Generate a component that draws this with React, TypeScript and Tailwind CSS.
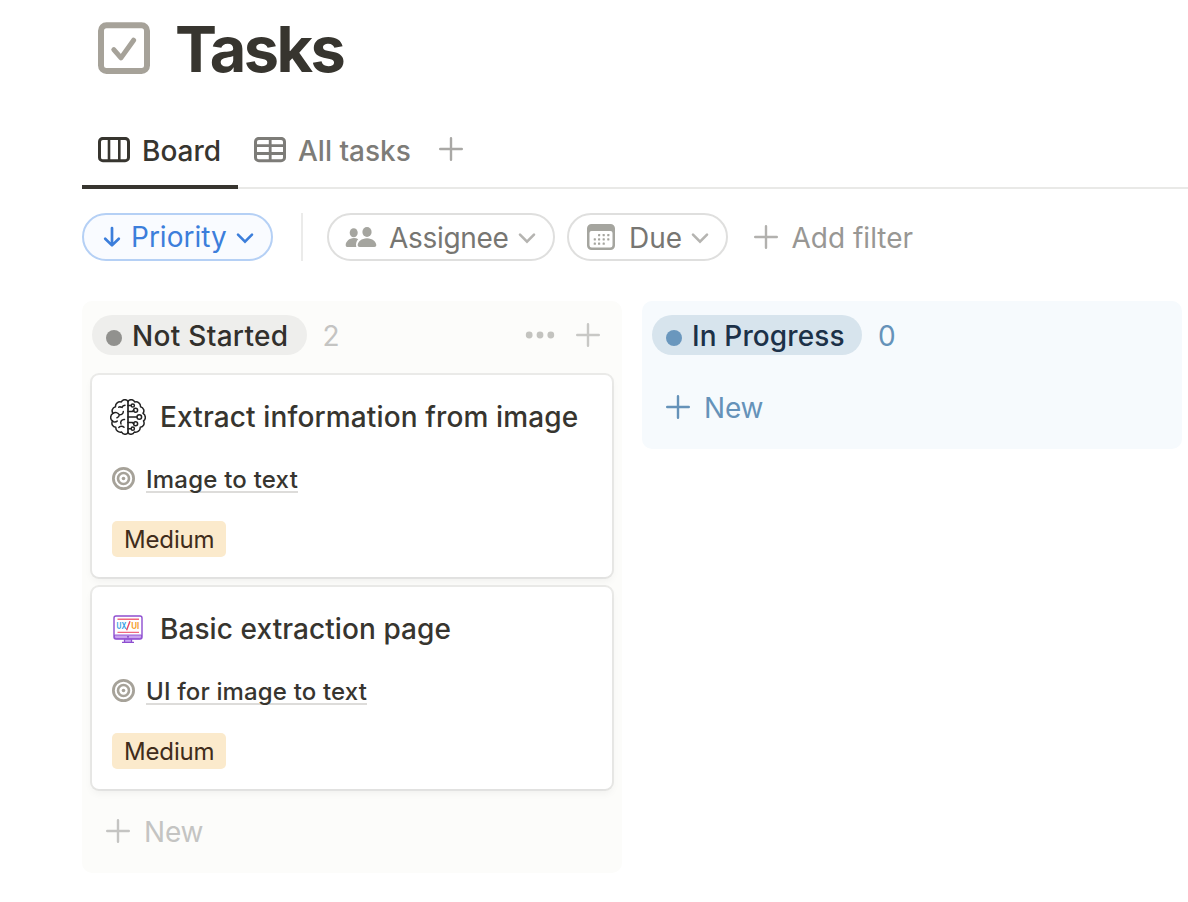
import type { ReactNode } from "react";

function Plus({ className = "" }: { className?: string }) {
  return (
    <svg viewBox="0 0 24 24" fill="none" stroke="currentColor" strokeWidth="2.4" strokeLinecap="round" className={`size-6 shrink-0 ${className}`}>
      <path d="M12 1.200v21.600M1.200 12h21.600" />
    </svg>
  );
}

function Chevron({ className = "" }: { className?: string }) {
  return (
    <svg viewBox="0 0 18 12" fill="none" stroke="currentColor" strokeWidth="2.6" strokeLinecap="round" strokeLinejoin="miter" className={`h-3 w-[18px] shrink-0 ${className}`}>
      <path d="M2 2.700l7 7 7-7" />
    </svg>
  );
}

function CheckboxIcon() {
  return (
    <svg viewBox="0 0 52 52" fill="none" stroke="#a6a299" className="size-[52px] shrink-0">
      <rect x="3" y="3.200" width="46" height="45.800" rx="5.5" strokeWidth="6" />
      <path d="M15.8 27.700l7.2 8.2L35.6 18.2" strokeWidth="5" strokeLinecap="round" strokeLinejoin="round" />
    </svg>
  );
}

function BoardIcon() {
  return (
    <svg viewBox="0 0 32 26" fill="none" stroke="currentColor" className="h-[26px] w-8 shrink-0">
      <rect x="1.5" y="1.4" width="29" height="22.4" rx="3.4" strokeWidth="3" />
      <path d="M11 2v22M21.3 2v22" strokeWidth="2.600" />
    </svg>
  );
}

function TableIcon() {
  return (
    <svg viewBox="0 0 32 26" fill="none" stroke="currentColor" className="h-[26px] w-8 shrink-0">
      <rect x="1.5" y="1.4" width="29" height="22.4" rx="3.4" strokeWidth="3" />
      <path d="M16.2 2v22M2 8.6h28M2 16.5h28" strokeWidth="2.800" />
    </svg>
  );
}

function ArrowDown() {
  return (
    <svg viewBox="0 0 18 22" fill="none" stroke="currentColor" strokeWidth="2.7" strokeLinecap="round" strokeLinejoin="round" className="h-[22px] w-[18px] shrink-0">
      <path d="M9 2v17M2.2 12.800l6.8 6.600 6.8-6.600" />
    </svg>
  );
}

function PeopleIcon() {
  return (
    <svg viewBox="0 0 32 22" fill="#a5a59f" className="h-[22px] w-8 shrink-0">
      <ellipse cx="8.700" cy="6.8" rx="4" ry="4.5" />
      <path d="M13.2 13.2c-1.2-.8-2.6-1.2-4.2-1.2C4.200 12 .7 15.800.7 19c0 1.400.7 2 2 2h8.600c-.8-3 .1-6 1.900-7.800z" />
      <ellipse cx="22" cy="6" rx="4.600" ry="5" />
      <path d="M22 12.200c-5.500 0-9.300 3.800-9.300 6.900 0 1.300.7 1.900 2 1.900h14.600c1.300 0 2-.6 2-1.900 0-3.100-3.800-6.900-9.300-6.900z" />
    </svg>
  );
}

function CalendarIcon() {
  const dots = [
    [11, 11], [15.600, 11], [20.200, 11],
    [6.700, 15.300], [11, 15.300], [15.600, 15.300], [20.200, 15.300],
    [6.700, 19.600], [11, 19.600], [15.600, 19.600],
  ];
  return (
    <svg viewBox="0 0 28 26" fill="#a5a59f" className="h-[26px] w-7 shrink-0">
      <path fillRule="evenodd" d="M4.500 0h19A4.500 4.500 0 0 1 28 4.500v17A4.500 4.500 0 0 1 23.500 26h-19A4.500 4.500 0 0 1 0 21.500v-17A4.500 4.500 0 0 1 4.500 0zM4.500 7A2 2 0 0 0 2.500 9v12.300a2.200 2.200 0 0 0 2.200 2.200h18.600a2.200 2.200 0 0 0 2.200-2.200V9a2 2 0 0 0-2-2z" />
      {dots.map(([x, y]) => (
        <rect key={`${x}-${y}`} x={x} y={y - 1} width="2.200" height="2.200" rx=".4" />
      ))}
    </svg>
  );
}

function TargetIcon() {
  return (
    <svg viewBox="0 0 24 24" fill="none" stroke="#a6a299" className="size-6 shrink-0">
      <circle cx="11.500" cy="11.500" r="10.100" strokeWidth="2.800" />
      <circle cx="11.500" cy="11.500" r="5.500" strokeWidth="2.600" />
      <circle cx="11.500" cy="11.500" r="1.800" fill="#a6a299" stroke="none" />
    </svg>
  );
}

function BrainIcon() {
  return (
    <svg viewBox="0 0 36 36" fill="none" stroke="#222" strokeWidth="1.500" strokeLinecap="round" strokeLinejoin="round" className="size-9 shrink-0">
      <path d="M18 2.500C16.500-.2 12.400.1 11.300 3 8.300 2.100 5.200 4.500 5.500 7.700 2.300 8.500 1.200 12 3 14.300.1 16-.1 20.200 2.500 21.900 1 24.800 2.600 28 5.800 28.300c-.2 3.300 2.900 5.500 5.800 4.700 1.300 2.800 5 3 6.400.6" />
      <path d="M18 2.500c1.500-2.700 5.600-2.400 6.700.5 3-.9 6.100 1.500 5.800 4.700 3.200.8 4.300 4.300 2.500 6.600 2.900 1.700 3.100 5.900.5 7.600 1.500 2.900-.1 6.100-3.300 6.400.2 3.300-2.900 5.500-5.800 4.700-1.300 2.800-5 3-6.400.6" />
      <path d="M18 2.500v31" strokeWidth="1.700" />
      <path d="M15 6.300c-1.500.2-2.600 1-3 2.100-1.300-.6-2.300-.7-3.300-.3M3 14.300c2.200-1.500 5.200-.8 6.300 1.500 2.300.2 4-1.200 4-3.400M9.300 15.800c-.1 1.600-.9 2.500-2.300 2.900M2.500 21.900c1.200 1.300 3.400 1.300 4.700.2M14.500 20.500c-2.700-.3-4.600 2-3.500 4.500M8.800 28.500c1-1.300 3.600-1.700 5.200-.2" />
      <path d="M18 6.500h3M18 12.500h4.200l1.600-1M18 18h9M18 23.500h4.200l1.600 1M18 29.700h3" />
      <circle cx="22.800" cy="6.500" r="1.600" />
      <circle cx="25.600" cy="11.300" r="2" />
      <circle cx="29.300" cy="18" r="2.300" />
      <circle cx="25.600" cy="24.700" r="2" />
      <circle cx="22.800" cy="29.700" r="1.600" />
    </svg>
  );
}

function MonitorIcon() {
  return (
    <svg viewBox="0 0 36 36" fill="none" className="size-9 shrink-0">
      <path d="M14 28h8v3h-8z" fill="#c9a7f2" />
      <rect x="4" y="5" width="28" height="23" rx="2" fill="#fff" stroke="#8e4ed0" strokeWidth="1.400" />
      <path d="M4.500 24h27V26a1.600 1.600 0 0 1-1.600 1.600H6.100A1.600 1.600 0 0 1 4.500 26z" fill="#c9a4ef" stroke="#8e4ed0" strokeWidth=".9" />
      <circle cx="18" cy="25.800" r=".9" fill="#7a3fc0" />
      <path d="M14.500 28.500v2.300M21.500 28.500v2.300M12 31.300h12" stroke="#8e4ed0" strokeWidth="1.300" />
      <path d="M7.500 8.300h21.500M7.500 21.400h21.500" stroke="#f0687f" strokeWidth="1.400" />
      <path d="M20 10.300l-3.400 9" stroke="#e8476a" strokeWidth="1.400" />
      <text x="6.500" y="18.200" fontSize="8.500" fontWeight="700" fill="#35a0e4" textLength="9.800" lengthAdjust="spacingAndGlyphs">UX</text>
      <text x="21.300" y="18.200" fontSize="8.500" fontWeight="700" fill="#f5a02c" textLength="8" lengthAdjust="spacingAndGlyphs">UI</text>
    </svg>
  );
}

function Card({ icon, title, project, titleClass, projectClass }: { icon: ReactNode; title: string; project: string; titleClass: string; projectClass: string }) {
  return (
    <article className="flex h-[202px] flex-col items-start rounded-[7px] bg-white pl-[18px] text-[#37352f] shadow-[0_0_0_2px_rgba(15,15,15,0.07),0_4px_8px_rgba(15,15,15,0.05)]">
      <div className="mt-6 flex h-9 items-center gap-[14px]">
        {icon}
        <h2 className={`text-[28px] leading-9 font-medium ${titleClass}`}>{title}</h2>
      </div>
      <div className="mt-[31px] ml-[2px] flex h-[27px] gap-[10px]">
        <span className="pt-px"><TargetIcon /></span>
        <a className={`h-[27px] border-b-2 border-[#dddcda] text-[24px] leading-[27px] font-medium ${projectClass}`}>{project}</a>
      </div>
      <span className="mt-7 ml-[2px] h-9 w-[114px] rounded-[5px] bg-[#fbeacc] pt-px pl-3 text-[24px] leading-9 tracking-[-0.15px] text-[#402c1b]">Medium</span>
    </article>
  );
}

export default function App() {
  return (
    <main className="h-[902px] w-[1188px] overflow-hidden bg-white pl-[82px] font-['Inter','Liberation_Sans',sans-serif] whitespace-nowrap">
      <header className="flex h-[125px] gap-[25px] pt-[22px] pl-4">
        <CheckboxIcon />
        <h1 className="h-14 text-[63px] leading-[54px] font-bold tracking-[-2.6px] text-[#37352f]">Tasks</h1>
      </header>

      <nav className="flex h-16 border-b-2 border-[#e9e9e7] text-[28px] font-medium text-[#7d7c78]">
        <div className="flex h-16 w-[156px] gap-3 border-b-4 border-[#37352f] pt-3 pl-4 text-[#37352f]">
          <BoardIcon />
          <span className="leading-7">Board</span>
        </div>
        <div className="flex gap-3 pt-3 pl-4">
          <TableIcon />
          <span className="w-[113px] leading-7">All tasks</span>
        </div>
        <Plus className="mt-3 ml-7 text-[#a9a8a5]" />
      </nav>

      <div className="mt-6 flex h-12 items-center text-[28px] leading-[46px]">
        <button className="flex h-12 w-[191px] items-center rounded-full border-2 border-[#b5d0f5] bg-[#f9fbff] pl-[19px] text-left text-[#3c7edb]">
          <ArrowDown />
          <span className="ml-[10px] h-[46px] w-[105px]">Priority</span>
          <Chevron className="mt-px" />
        </button>
        <div className="ml-7 h-12 w-[2px] bg-[#ebebea]" />
        <button className="ml-6 flex h-12 w-[228px] items-center rounded-full border-2 border-[#dfdfde] pl-4 text-left text-[#777672]">
          <PeopleIcon />
          <span className="ml-3 w-[129px] pt-[2px] tracking-[-0.3px]">Assignee</span>
          <Chevron className="mt-px text-[#b5b4b1]" />
        </button>
        <button className="ml-3 flex h-12 w-[161px] items-center rounded-full border-2 border-[#dfdfde] pl-[18px] text-left text-[#777672]">
          <CalendarIcon />
          <span className="ml-[14px] w-[62px] pt-[2px]">Due</span>
          <Chevron className="mt-px text-[#b5b4b1]" />
        </button>
        <button className="ml-[26px] flex h-12 items-center text-[#989794]">
          <Plus className="text-[#b2b1ae]" />
          <span className="ml-[13.5px] pt-[2px]">Add filter</span>
        </button>
      </div>

      <div className="mt-10 flex items-start gap-5">
        <section className="h-[572px] w-[540px] shrink-0 rounded-[10px] bg-[#fcfcfa] px-[10px] pt-[14px]">
          <div className="flex h-10 items-center text-[28px]">
            <div className="flex h-10 w-[215px] items-center rounded-full bg-[#eeeeec] pl-[14px]">
              <span className="mt-[6px] size-4 rounded-full bg-[#91918e]" />
              <span className="ml-[10px] pt-[2px] leading-10 font-medium tracking-[0.3px] text-[#32302c]">Not Started</span>
            </div>
            <span className="ml-[15.5px] pt-[2px] leading-10 text-[#c4c4c2]">2</span>
            <svg viewBox="0 0 30 8" fill="#c3c3bf" className="ml-auto h-2 w-[30px]">
              <circle cx="4.200" cy="4" r="3.400" />
              <circle cx="15" cy="4" r="3.400" />
              <circle cx="25.800" cy="4" r="3.400" />
            </svg>
            <Plus className="mr-3 ml-[21px] text-[#c8c8c5]" />
          </div>
          <div className="mt-5 flex flex-col gap-[10px]">
            <Card icon={<BrainIcon />} title="Extract information from image" titleClass="tracking-[0.13px]" project="Image to text" projectClass="tracking-[0.22px]" />
            <Card icon={<MonitorIcon />} title="Basic extraction page" titleClass="tracking-[0.08px]" project="UI for image to text" projectClass="tracking-[0.15px]" />
          </div>
          <button className="mt-[30px] ml-[14px] flex h-6 items-center text-[28px] leading-6 text-[#c4c4c2]">
            <Plus />
            <span className="ml-[14px] pt-[2px] tracking-[-0.2px]">New</span>
          </button>
        </section>

        <section className="h-[148px] w-[540px] shrink-0 rounded-[10px] bg-[#f6fafd] px-[10px] pt-[14px]">
          <div className="flex h-10 items-center text-[28px]">
            <div className="flex h-10 w-[210px] items-center rounded-full bg-[#d7e4ed] pl-[14px]">
              <span className="mt-[6px] size-4 rounded-full bg-[#6a97bd]" />
              <span className="ml-[10px] pt-[2px] leading-10 font-medium tracking-[0.12px] text-[#1c3148]">In Progress</span>
            </div>
            <span className="ml-4 pt-[2px] leading-10 text-[#6592b9]">0</span>
          </div>
          <button className="mt-10 ml-[14px] flex h-6 items-center text-[28px] leading-6 text-[#6592b9]">
            <Plus />
            <span className="ml-[14px] pt-[2px] tracking-[-0.2px]">New</span>
          </button>
        </section>
      </div>
    </main>
  );
}
